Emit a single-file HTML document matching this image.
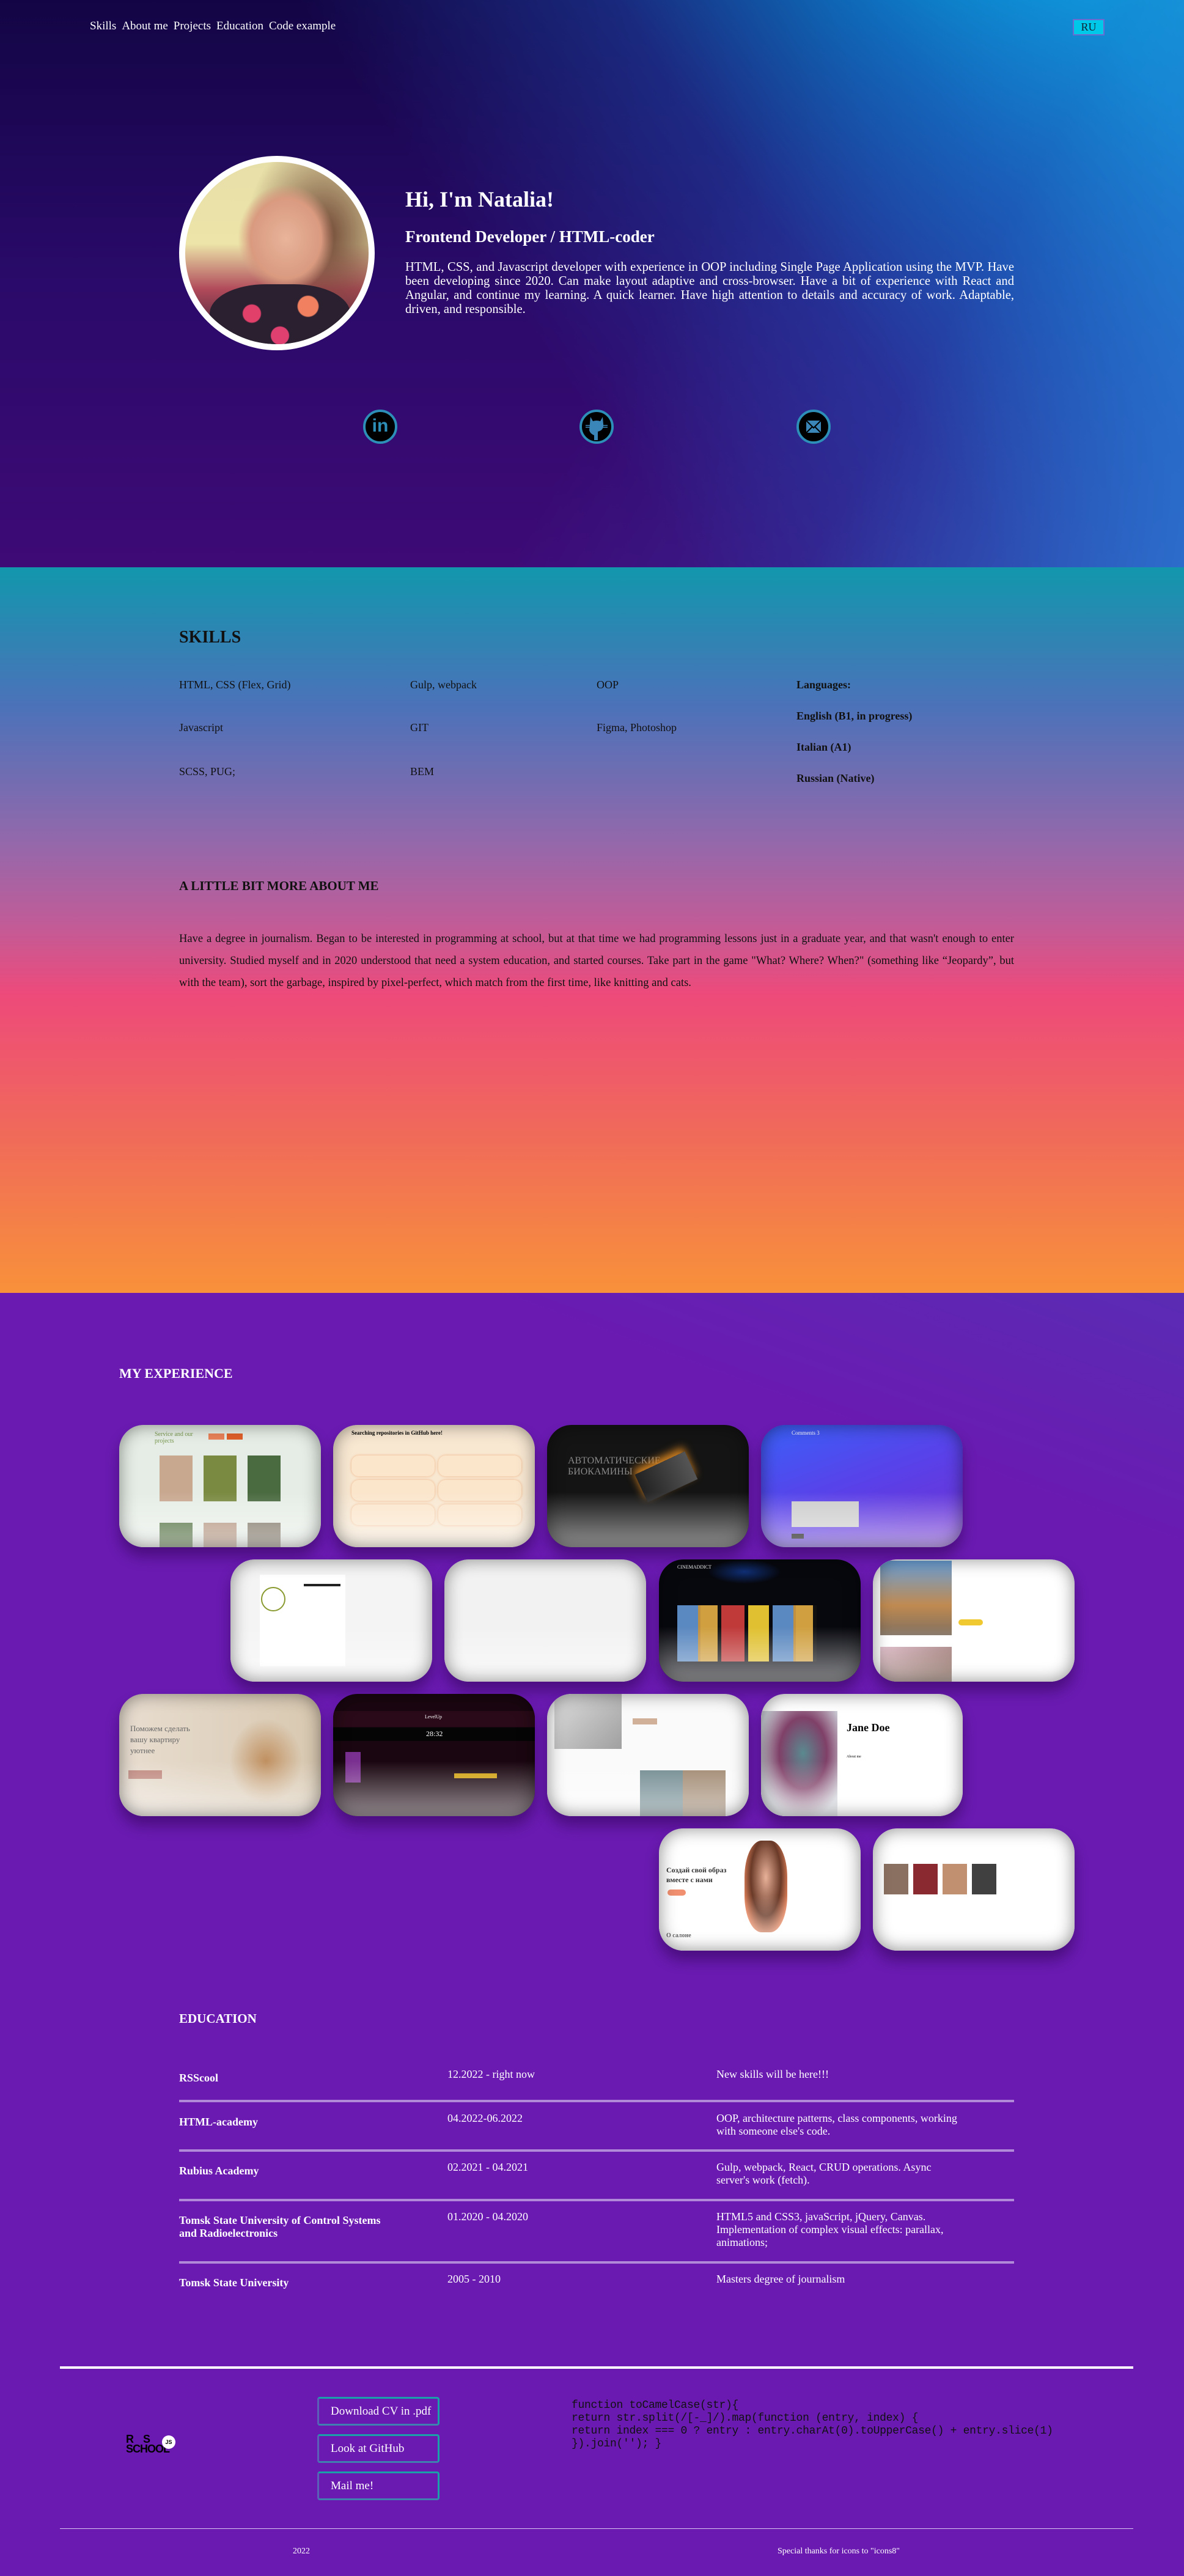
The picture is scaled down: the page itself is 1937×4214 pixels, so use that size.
<!DOCTYPE html>
<html><head><meta charset="utf-8">
<style>
*{margin:0;padding:0;box-sizing:border-box}
body{width:1937px;height:4214px;position:relative;font-family:"Liberation Serif",serif;overflow:hidden;background:#6a1ab1}
.a{position:absolute;white-space:nowrap}
#hero{position:absolute;left:0;top:0;width:1937px;height:928px;
background:linear-gradient(235deg,rgba(0,208,248,1) 0%,rgba(0,190,240,1) 6%,rgba(12,130,210,.85) 20%,rgba(30,70,170,.55) 36%,rgba(40,30,140,0) 56%),linear-gradient(180deg,#130545 0%,#2a0a6a 50%,#3e0a76 100%)}
#hero2{position:absolute;left:0;top:0;width:1937px;height:928px;background:linear-gradient(300deg,rgba(46,110,205,.9) 0%,rgba(46,60,170,.4) 25%,rgba(40,20,120,0) 45%)}
nav span{color:#fff;font-size:19px;margin-right:9px}
#skills{position:absolute;left:0;top:928px;width:1937px;height:1187px;
background:linear-gradient(180deg,#1297ad 0%,#4b72b9 19%,#9468ab 38%,#c05c98 49%,#ee4a7a 59%,#f06a5a 78%,#f8913a 100%)}
.sk{font-size:18px;color:#111}
.b{font-weight:bold}
#exp{position:absolute;left:0;top:2115px;width:1937px;height:2099px;background:linear-gradient(200deg,#5a2cb4 0%,#6a1ab1 15%,#6a1ab1 100%)}
.card{position:absolute;width:330px;height:200px;border-radius:40px;overflow:hidden;box-shadow:0 16px 22px rgba(40,0,70,.45)}
.card::after{content:"";position:absolute;inset:0;border-radius:40px;box-shadow:inset 0 0 28px rgba(0,0,0,.45);background:linear-gradient(180deg,rgba(255,255,255,0) 55%,rgba(255,255,255,.55) 100%)}
.in{position:absolute}
.w{color:#fff}
.ed{font-size:18px;color:#fff;line-height:21px}
.line{position:absolute;left:293px;width:1366px;height:4px;background:#b08ad8}
.btn{position:absolute;left:519px;width:200px;height:47px;border:3px solid #1aa0a8;border-left-color:#5a60b8;border-bottom-color:#3f80b0;border-radius:4px;color:#fff;font-size:19px;padding:10px 0 0 19px}
.soc{position:absolute;width:56px;height:56px;border-radius:50%;background:#000;border:4px solid #2d8fb8;top:670px}
</style></head><body>
<div id="hero"></div><div id="hero2"></div>
<nav class="a" style="left:147px;top:32px"><span>Skills</span><span>About me</span><span>Projects</span><span>Education</span><span>Code example</span></nav>
<div class="a" style="left:1755px;top:31px;width:52px;height:27px;background:#00c8e8;border:2px solid #6a6ad0;color:#123;font-size:18px;text-align:center;line-height:23px">RU</div>

<div class="a" style="left:293px;top:255px;width:320px;height:318px;border-radius:50%;background:#fff"></div>
<div class="a" style="left:303px;top:265px;width:300px;height:298px;border-radius:50%;overflow:hidden;background:radial-gradient(ellipse 35% 40% at 55% 42%,#e8b49a 0%,#d99a80 55%,rgba(120,70,50,.0) 75%),radial-gradient(ellipse 60% 80% at 75% 40%,#6a4030 0%,rgba(90,60,40,0) 70%),linear-gradient(180deg,#e7dfa8 0%,#ece4a8 45%,#b04a5a 70%,#2a1a30 100%)">
 <div class="in" style="left:40px;top:200px;width:230px;height:120px;border-radius:40%;background:radial-gradient(circle at 30% 40%,#e0406a 0 8%,transparent 9%),radial-gradient(circle at 70% 30%,#f08060 0 9%,transparent 10%),radial-gradient(circle at 50% 70%,#e04070 0 10%,transparent 11%),#2a2030"></div>
</div>
<div class="a w b" style="left:663px;top:305px;font-size:36px">Hi, I'm Natalia!</div>
<div class="a w b" style="left:663px;top:372px;font-size:27px">Frontend Developer / HTML-coder</div>
<div class="a w" style="left:663px;top:426px;width:996px;white-space:normal;font-size:20.6px;line-height:23px;text-align:justify">HTML, CSS, and Javascript developer with experience in OOP including Single Page Application using the MVP. Have been developing since 2020. Can make layout adaptive and cross-browser. Have a bit of experience with React and Angular, and continue my learning. A quick learner. Have high attention to details and accuracy of work. Adaptable, driven, and responsible.</div>

<div class="soc" style="left:594px"><div style="color:#2d8fb8;font:bold 30px 'Liberation Sans',sans-serif;text-align:center;line-height:46px">in</div></div>
<div class="soc" style="left:948px"><svg width="48" height="48" viewBox="0 0 48 48"><path d="M14 8 L18 15 Q24 13 30 15 L34 8 L35 20 Q36 30 26 32 L26 46 L20 46 L20 38 Q14 36 12 30 M22 32 Q14 30 13 20 Z" fill="#3a86b8"/><path d="M6 22 H16 M6 25 H16 M32 22 H42 M32 25 H42" stroke="#3a86b8" stroke-width="1.5"/></svg></div>
<div class="soc" style="left:1303px"><svg width="48" height="48" viewBox="0 0 48 48"><rect x="12" y="14" width="24" height="20" fill="#3a86b8"/><path d="M12 14 L24 26 L36 14 M12 34 L22 24 M36 34 L26 24" stroke="#000" stroke-width="2" fill="none"/></svg></div>

<div id="skills"></div>
<div class="a b" style="left:293px;top:1027px;font-size:28px;color:#111">SKILLS</div>
<div class="a sk" style="left:293px;top:1110px">HTML, CSS (Flex, Grid)</div>
<div class="a sk" style="left:293px;top:1180px">Javascript</div>
<div class="a sk" style="left:293px;top:1252px">SCSS, PUG;</div>
<div class="a sk" style="left:671px;top:1110px">Gulp, webpack</div>
<div class="a sk" style="left:671px;top:1180px">GIT</div>
<div class="a sk" style="left:671px;top:1252px">BEM</div>
<div class="a sk" style="left:976px;top:1110px">OOP</div>
<div class="a sk" style="left:976px;top:1180px">Figma, Photoshop</div>
<div class="a sk b" style="left:1303px;top:1110px">Languages:</div>
<div class="a sk b" style="left:1303px;top:1161px">English (B1, in progress)</div>
<div class="a sk b" style="left:1303px;top:1212px">Italian (A1)</div>
<div class="a sk b" style="left:1303px;top:1263px">Russian (Native)</div>
<div class="a b" style="left:293px;top:1437px;font-size:21px;color:#111">A LITTLE BIT MORE ABOUT ME</div>
<div class="a sk" style="left:293px;top:1518px;width:1366px;white-space:normal;line-height:36px;text-align:justify;font-size:18.5px">Have a degree in journalism. Began to be interested in programming at school, but at that time we had programming lessons just in a graduate year, and that wasn't enough to enter university. Studied myself and in 2020 understood that need a system education, and started courses. Take part in the game "What? Where? When?" (something like “Jeopardy”, but with the team), sort the garbage, inspired by pixel-perfect, which match from the first time, like knitting and cats.</div>

<div id="exp"></div>
<div class="a w b" style="left:195px;top:2234px;font-size:22px">MY EXPERIENCE</div>

<div class="card" style="left:195px;top:2331px;background:#e6ede6">
 <div class="in" style="left:58px;top:10px;color:#7a9a50;font-size:10px">Service and our<br>projects</div>
 <div class="in" style="left:146px;top:14px;width:26px;height:10px;background:#e9825a"></div><div class="in" style="left:176px;top:14px;width:26px;height:10px;background:#e0602a"></div>
 <div class="in" style="left:66px;top:50px;width:54px;height:75px;background:#c9a890"></div><div class="in" style="left:138px;top:50px;width:54px;height:75px;background:#7a8a40"></div><div class="in" style="left:210px;top:50px;width:54px;height:75px;background:#4a6a40"></div>
 <div class="in" style="left:66px;top:160px;width:54px;height:75px;background:#4a6a38"></div><div class="in" style="left:138px;top:160px;width:54px;height:75px;background:#b0907a"></div><div class="in" style="left:210px;top:160px;width:54px;height:75px;background:#7a7060"></div>
</div>
<div class="card" style="left:545px;top:2331px;background:#f8e8d2">
 <div class="in" style="left:30px;top:8px;font-size:9px;font-weight:bold">Searching repositories in GitHub here!</div>
 <div class="in" style="left:30px;top:50px;width:136px;height:34px;border-radius:12px;background:#fbe6cc;box-shadow:0 0 4px #f0b080"></div><div class="in" style="left:172px;top:50px;width:136px;height:34px;border-radius:12px;background:#fbe6cc;box-shadow:0 0 4px #f0b080"></div>
 <div class="in" style="left:30px;top:90px;width:136px;height:34px;border-radius:12px;background:#fbe6cc;box-shadow:0 0 4px #f0b080"></div><div class="in" style="left:172px;top:90px;width:136px;height:34px;border-radius:12px;background:#fbe6cc;box-shadow:0 0 4px #f0b080"></div>
 <div class="in" style="left:30px;top:130px;width:136px;height:34px;border-radius:12px;background:#fbe6cc;box-shadow:0 0 4px #f0b080"></div><div class="in" style="left:172px;top:130px;width:136px;height:34px;border-radius:12px;background:#fbe6cc;box-shadow:0 0 4px #f0b080"></div>
</div>
<div class="card" style="left:895px;top:2331px;background:#141414">
 <div class="in" style="left:34px;top:50px;color:#888;font-size:16px">АВТОМАТИЧЕСКИЕ<br>БИОКАМИНЫ</div>
 <div class="in" style="left:150px;top:60px;width:90px;height:50px;background:linear-gradient(90deg,#222,#555);transform:rotate(-25deg);box-shadow:0 -8px 14px #d08020"></div>
</div>
<div class="card" style="left:1245px;top:2331px;background:linear-gradient(160deg,#3a60f8 0%,#5a40e8 50%,#7030d0 100%)">
 <div class="in w" style="left:50px;top:8px;font-size:9px">Comments 3</div>
 <div class="in" style="left:50px;top:125px;width:110px;height:42px;background:#ccc"></div>
 <div class="in" style="left:50px;top:178px;width:20px;height:8px;background:#000"></div>
</div>

<div class="card" style="left:377px;top:2551px;background:#f4f4f4">
 <div class="in" style="left:48px;top:25px;width:140px;height:150px;background:#fff"></div>
 <div class="in" style="left:50px;top:45px;width:40px;height:40px;border:2px solid #8a9a30;border-radius:50%"></div>
 <div class="in" style="left:120px;top:40px;width:60px;height:4px;background:#222"></div>
</div>
<div class="card" style="left:727px;top:2551px;background:#f2f2f2"></div>
<div class="card" style="left:1078px;top:2551px;background:#07080e">
 <div class="in" style="left:80px;top:0;width:120px;height:40px;background:radial-gradient(#103078,transparent 70%)"></div>
 <div class="in w" style="left:30px;top:8px;font-size:8px">CINEMADDICT</div>
 <div class="in" style="left:30px;top:75px;width:228px;height:92px;background:repeating-linear-gradient(90deg,#5a88c0 0 34px,#c09040 34px 38px,#d0a040 38px 66px,#101010 66px 72px,#c03a3a 72px 110px,#07080e 110px 116px,#e0c030 116px 150px,#07080e 150px 156px)"></div>
</div>
<div class="card" style="left:1428px;top:2551px;background:#fff">
 <div class="in" style="left:12px;top:2px;width:117px;height:122px;background:linear-gradient(180deg,#6aa0d8,#c08a50 60%,#807060)"></div>
 <div class="in" style="left:12px;top:143px;width:117px;height:122px;background:linear-gradient(160deg,#d8b0c0,#6a4030 50%,#302020)"></div>
 <div class="in" style="left:140px;top:98px;width:40px;height:10px;border-radius:5px;background:#f0c830"></div>
</div>

<div class="card" style="left:195px;top:2771px;background:linear-gradient(90deg,#e8ddd0,#d8c8b0)">
 <div class="in" style="left:18px;top:48px;color:#666;font-size:13px;line-height:18px">Поможем сделать<br>вашу квартиру<br>уютнее</div>
 <div class="in" style="left:15px;top:125px;width:55px;height:14px;background:#c08a80"></div>
 <div class="in" style="left:180px;top:40px;width:120px;height:140px;background:radial-gradient(#c09060,transparent 70%)"></div>
</div>
<div class="card" style="left:545px;top:2771px;background:#1a0610">
 <div class="in" style="left:0;top:28px;width:330px;height:26px;background:#2a0a18"></div>
 <div class="in w" style="left:150px;top:33px;font-size:8px">LevelUp</div>
 <div class="in" style="left:0;top:55px;width:330px;height:22px;background:#050505"></div>
 <div class="in w" style="left:152px;top:58px;font-size:12px">28:32</div>
 <div class="in" style="left:20px;top:95px;width:25px;height:50px;background:#7a3090"></div>
 <div class="in" style="left:198px;top:130px;width:70px;height:8px;background:#d0a010"></div>
</div>
<div class="card" style="left:895px;top:2771px;background:#fafafa">
 <div class="in" style="left:12px;top:0;width:110px;height:90px;background:linear-gradient(135deg,#ddd,#a0a0a0)"></div>
 <div class="in" style="left:140px;top:40px;width:40px;height:10px;background:#d0b098"></div>
 <div class="in" style="left:152px;top:125px;width:70px;height:75px;background:#708a90"></div>
 <div class="in" style="left:222px;top:125px;width:70px;height:75px;background:#a08870"></div>
</div>
<div class="card" style="left:1245px;top:2771px;background:#fff">
 <div class="in" style="left:0;top:28px;width:125px;height:172px;background:radial-gradient(ellipse at 55% 40%,#5a8a90 0%,#804068 40%,#cdd0d8 75%)"></div>
 <div class="in b" style="left:140px;top:45px;font-size:18px">Jane Doe</div>
 <div class="in" style="left:140px;top:100px;font-size:6px">About me</div>
</div>

<div class="card" style="left:1078px;top:2991px;background:#fff">
 <div class="in" style="left:12px;top:60px;font-size:12px;font-weight:bold;color:#333;line-height:16px">Создай свой образ<br>вместе с нами</div>
 <div class="in" style="left:14px;top:100px;width:30px;height:10px;border-radius:5px;background:#f09070"></div>
 <div class="in" style="left:140px;top:20px;width:70px;height:150px;border-radius:40%;background:radial-gradient(ellipse at 50% 40%,#e8b098 0%,#6a3a28 50%,#f08a60 80%,transparent 82%)"></div>
 <div class="in b" style="left:12px;top:170px;font-size:10px">О салоне</div>
</div>
<div class="card" style="left:1428px;top:2991px;background:#fff">
 <div class="in" style="left:18px;top:58px;width:40px;height:50px;background:#8a7060"></div>
 <div class="in" style="left:66px;top:58px;width:40px;height:50px;background:#8a2a30"></div>
 <div class="in" style="left:114px;top:58px;width:40px;height:50px;background:#c09070"></div>
 <div class="in" style="left:162px;top:58px;width:40px;height:50px;background:#404040"></div>
</div>

<div class="a w b" style="left:293px;top:3290px;font-size:21px">EDUCATION</div>
<div class="a ed b" style="left:293px;top:3389px">RSScool</div>
<div class="a ed" style="left:732px;top:3383px">12.2022 - right now</div>
<div class="a ed" style="left:1172px;top:3383px">New skills will be here!!!</div>
<div class="line" style="top:3435px"></div>
<div class="a ed b" style="left:293px;top:3461px">HTML-academy</div>
<div class="a ed" style="left:732px;top:3455px">04.2022-06.2022</div>
<div class="a ed" style="left:1172px;top:3455px">OOP, architecture patterns, class components, working<br>with someone else's code.</div>
<div class="line" style="top:3516px"></div>
<div class="a ed b" style="left:293px;top:3541px">Rubius Academy</div>
<div class="a ed" style="left:732px;top:3535px">02.2021 - 04.2021</div>
<div class="a ed" style="left:1172px;top:3535px">Gulp, webpack, React, CRUD operations. Async<br>server's work (fetch).</div>
<div class="line" style="top:3597px"></div>
<div class="a ed b" style="left:293px;top:3622px">Tomsk State University of Control Systems<br>and Radioelectronics</div>
<div class="a ed" style="left:732px;top:3616px">01.2020 - 04.2020</div>
<div class="a ed" style="left:1172px;top:3616px">HTML5 and CSS3, javaScript, jQuery, Canvas.<br>Implementation of complex visual effects: parallax,<br>animations;</div>
<div class="line" style="top:3699px"></div>
<div class="a ed b" style="left:293px;top:3724px">Tomsk State University</div>
<div class="a ed" style="left:732px;top:3718px">2005 - 2010</div>
<div class="a ed" style="left:1172px;top:3718px">Masters degree of journalism</div>

<div class="a" style="left:98px;top:3871px;width:1756px;height:4px;background:#fff"></div>
<div class="a b" style="left:206px;top:3982px;font:bold 18px/16px 'Liberation Sans',sans-serif;color:#000;letter-spacing:-1px">R&nbsp;&nbsp;&nbsp;&nbsp;S<br>SCHOOL</div>
<div class="a" style="left:265px;top:3984px;width:22px;height:22px;border-radius:50%;background:#fff;font:bold 9px/22px 'Liberation Sans',sans-serif;text-align:center;color:#000">JS</div>
<div class="btn" style="top:3921px">Download CV in .pdf</div>
<div class="btn" style="top:3982px">Look at GitHub</div>
<div class="btn" style="top:4043px">Mail me!</div>
<div class="a" style="left:935px;top:3925px;font:18px/21px 'Liberation Mono',monospace;color:#111;letter-spacing:-0.3px">function toCamelCase(str){<br>return str.split(/[-_]/).map(function (entry, index) {<br>return index === 0 ? entry : entry.charAt(0).toUpperCase() + entry.slice(1)<br>}).join(''); }</div>
<div class="a" style="left:98px;top:4136px;width:1756px;height:1px;background:#d8c8f0"></div>
<div class="a w" style="left:479px;top:4166px;font-size:14px">2022</div>
<div class="a w" style="left:1272px;top:4166px;font-size:14px">Special thanks for icons to "icons8"</div>
</body></html>
